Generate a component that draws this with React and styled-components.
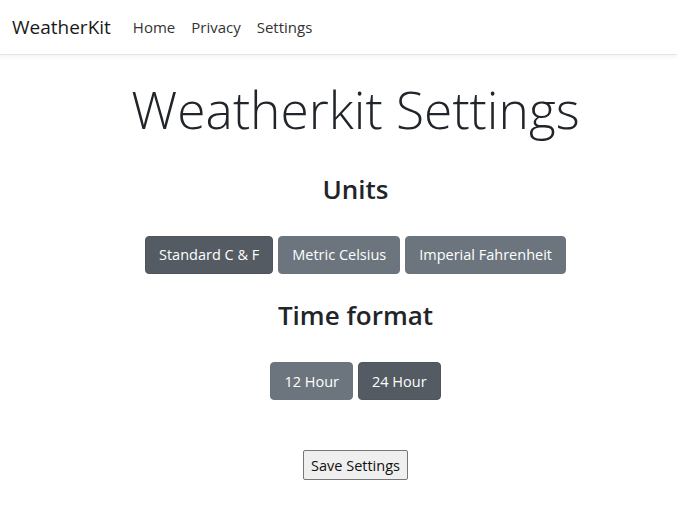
import React, { useState } from 'react'
import styled, { createGlobalStyle } from 'styled-components'

const GlobalStyle = createGlobalStyle`
    body {
        margin: 0;
        background: #fff;
        color: #212529;
        font-family: "Open Sans", "Noto Sans", sans-serif;
    }
`

const Navbar = styled.nav`
    display: flex;
    align-items: center;
    height: 54px;
    padding: 0 12px;
    border-bottom: 1px solid #e5e5e5;
    box-shadow: 0 2px 4px rgba(0, 0, 0, 0.05);
`

const Brand = styled.a`
    font-size: 19px;
    color: #1a1a1a;
    text-decoration: none;
    margin-right: 22px;
`

const NavLinks = styled.ul`
    display: flex;
    list-style: none;
    margin: 0;
    padding: 0;
    gap: 16px;

    a {
        font-size: 15px;
        color: #333;
        text-decoration: none;
    }
`

const Main = styled.main`
    display: flex;
    flex-direction: column;
    align-items: center;
    padding: 24px 0 0 34px;
`

const Title = styled.h1`
    font-size: 51.5px;
    font-weight: 300;
    margin: 0 0 33px;
    line-height: 1.2;
`

const Heading = styled.h3`
    font-size: 26px;
    font-weight: 600;
    margin: 0 0 31px;
    line-height: 1.2;
`

const ButtonGroup = styled.div`
    display: flex;
    gap: 5px;
    margin-bottom: 26px;
`

const Toggle = styled.button`
    font-family: inherit;
    font-size: 14.5px;
    color: #fff;
    background: ${p => (p.$active ? '#545b62' : '#6c757d')};
    border: 1px solid ${p => (p.$active ? '#4e555b' : '#6c757d')};
    border-radius: 4px;
    height: 38px;
    padding: 0 13px;
`

const SaveButton = styled.button`
    font-family: inherit;
    font-size: 14.5px;
    color: #111;
    background: #efefef;
    border: 1px solid #767676;
    border-radius: 2px;
    height: 30px;
    padding: 0 7px;
    margin-top: 24px;
`

const units = ['Standard C & F', 'Metric Celsius', 'Imperial Fahrenheit']
const formats = ['12 Hour', '24 Hour']

const App = () => {
    const [unit, setUnit] = useState(0)
    const [format, setFormat] = useState(1)

    return (
        <>
            <GlobalStyle />
            <Navbar>
                <Brand href="#">WeatherKit</Brand>
                <NavLinks>
                    <li><a href="#">Home</a></li>
                    <li><a href="#">Privacy</a></li>
                    <li><a href="#">Settings</a></li>
                </NavLinks>
            </Navbar>
            <Main>
                <Title>Weatherkit Settings</Title>
                <Heading>Units</Heading>
                <ButtonGroup>
                    {units.map((u, i) => (
                        <Toggle key={u} $active={unit === i} onClick={() => setUnit(i)}>{u}</Toggle>
                    ))}
                </ButtonGroup>
                <Heading>Time format</Heading>
                <ButtonGroup>
                    {formats.map((f, i) => (
                        <Toggle key={f} $active={format === i} onClick={() => setFormat(i)}>{f}</Toggle>
                    ))}
                </ButtonGroup>
                <SaveButton>Save Settings</SaveButton>
            </Main>
        </>
    )
}

export default App
